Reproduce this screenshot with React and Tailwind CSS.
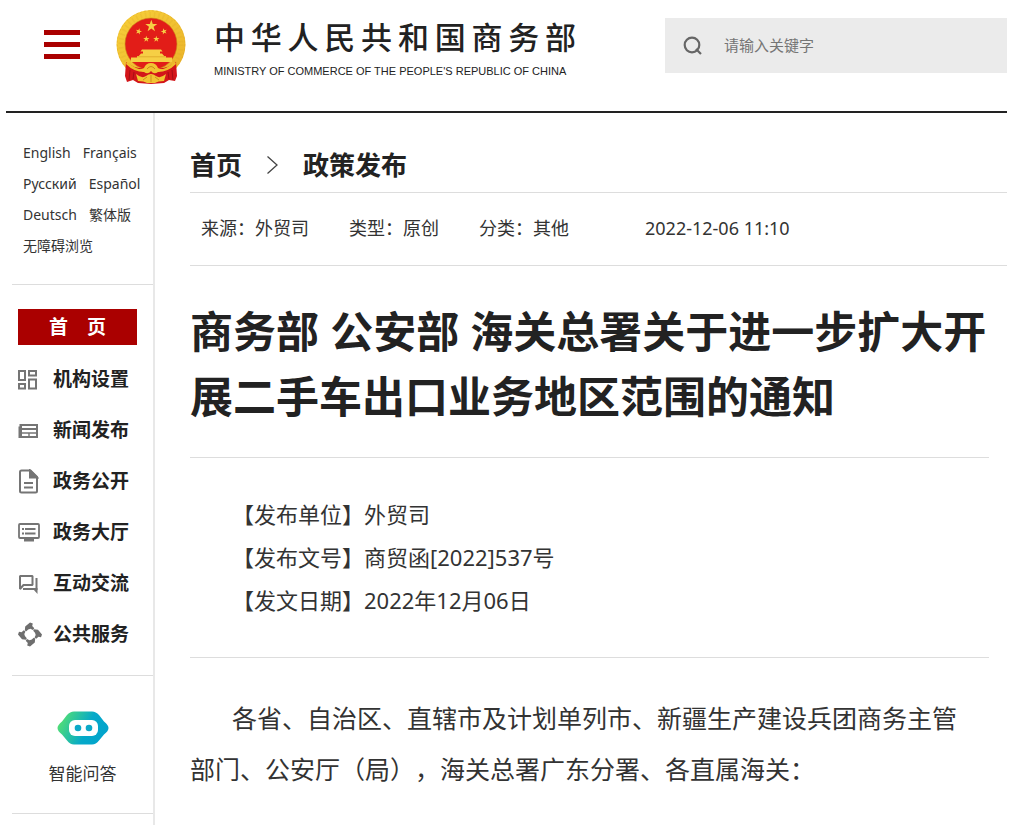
import React from 'react';

const languages = [
    ['English', 'Français'],
    ['Русский', 'Español'],
    ['Deutsch', '繁体版'],
    ['无障碍浏览'],
];

const OrgIcon = () => (
    <svg width="20" height="20" viewBox="0 0 20 20" fill="none" stroke="#757575" strokeWidth="2">
        <rect x="1" y="1" width="6" height="9" />
        <rect x="11" y="1" width="7" height="4.500" />
        <rect x="1" y="14" width="6" height="4.500" />
        <rect x="11" y="9.500" width="7" height="9" />
    </svg>
);

const NewsIcon = () => (
    <svg width="21" height="16" viewBox="0 0 21 16" fill="none" stroke="#757575" strokeWidth="2">
        <path d="M2.500 2H19V14H1.500V4.500H2.500z" />
        <path d="M2 6h17M3 2v12" />
        <path d="M3 10h16M11 10V14" strokeWidth="1.400" />
    </svg>
);

const DocIcon = () => (
    <svg width="21" height="25" viewBox="0 0 21 25" fill="none" stroke="#757575" strokeWidth="2">
        <path d="M3.500 1.500H12.500L19 8V22Q19 23.500 17.500 23.500H3.500Q2 23.500 2 22V3Q2 1.500 3.500 1.500Z" />
        <path d="M12 1.500V8.500H19Z" fill="#757575" />
        <path d="M6 14h9M6 18.500h9" />
    </svg>
);

const HallIcon = () => (
    <svg width="22" height="19" viewBox="0 0 22 19" fill="none" stroke="#757575" strokeWidth="1.800">
        <rect x="1" y="1" width="20" height="14" rx="1" />
        <path d="M4 6h2M7 6h10.500M4 10.500h2M7 10.500h10.500" />
        <path d="M6 17h10" strokeWidth="3" />
    </svg>
);

const ChatIcon = () => (
    <svg width="21" height="20" viewBox="0 0 21 20" fill="none" stroke="#757575" strokeWidth="2">
        <path d="M2 15V2h12.500v9H5.500z" strokeLinejoin="bevel" />
        <path d="M18.500 4v12M18 15H5" />
        <path d="M19.500 14v6L15 15z" fill="#757575" stroke="none" />
    </svg>
);

const ServiceIcon = () => (
    <svg width="24" height="25" viewBox="0 0 24 25" fill="#6e6e6e">
        <path id="blade" d="M6.800 8.500L7.200 4.500L12 .5L14.800 1.500L14.200 4L16.300 6.300L15 8L12.500 6.800Q10 7 8.300 9.300Z" />
        <use href="#blade" transform="rotate(90 12 12.500)" />
        <use href="#blade" transform="rotate(180 12 12.500)" />
        <use href="#blade" transform="rotate(270 12 12.500)" />
    </svg>
);

const navItems = [
    { label: '机构设置', icon: OrgIcon },
    { label: '新闻发布', icon: NewsIcon },
    { label: '政务公开', icon: DocIcon },
    { label: '政务大厅', icon: HallIcon },
    { label: '互动交流', icon: ChatIcon },
    { label: '公共服务', icon: ServiceIcon },
];

const details = [
    '【发布单位】外贸司',
    '【发布文号】商贸函[2022]537号',
    '【发文日期】2022年12月06日',
];

const STAR = 'M0-6L1.400-1.900H5.700L2.200.7 3.500 4.900 0 2.300-3.500 4.900-2.200.7-5.700-1.900H-1.400Z';

const Emblem = () => (
    <svg width="70" height="74" viewBox="0 0 70 74" aria-hidden="true">
        <defs>
            <linearGradient id="gold" x1="0" y1="0" x2="1" y2="1">
                <stop offset="0" stopColor="#f7cf3a" />
                <stop offset="0.5" stopColor="#f1c232" />
                <stop offset="1" stopColor="#e9b028" />
            </linearGradient>
        </defs>
        <circle cx="35" cy="34.500" r="34.500" fill="url(#gold)" />
        <circle cx="35" cy="34.500" r="30" fill="none" stroke="#d99f22" strokeWidth="5" strokeDasharray="1.500 3" opacity="0.2" />
        <circle cx="35" cy="34.500" r="33.800" fill="none" stroke="#d79a1f" strokeWidth="1" strokeDasharray="2 2" opacity="0.4" />
        <circle cx="35" cy="34" r="26" fill="#e21d18" stroke="#c98a1a" strokeWidth="0.600" />
        {/* stars */}
        <g fill="#f6cf45">
            <path d={STAR} transform="translate(35.300 16) scale(1.050)" />
            <path d={STAR} transform="translate(22.700 21.500) rotate(15) scale(.55)" />
            <path d={STAR} transform="translate(48 21.500) rotate(-15) scale(.55)" />
            <path d={STAR} transform="translate(30.300 29) scale(.55)" />
            <path d={STAR} transform="translate(40.300 29) scale(.55)" />
            {/* Tiananmen gate */}
            <path d="M26 39.500H45L46.500 41.500H24.500ZM27 41H44V44H27ZM25 43.500H46L49 47H22ZM21 46H50V49H21ZM15 47.500H56V52H15Z" />
        </g>
        <path d="M21 46.800H50" stroke="#d99f22" strokeWidth="0.700" />
        {/* ribbons and gear */}
        <path d="M10 52Q22 61 31 57Q35 52 39 57Q48 61 60 52L61 66 59 71 53 70 48 73 35 74 22 73 17 70 11 72 9 66Z" fill="#d3151a" />
        <path d="M11 52Q22 61 29 59L28 62Q18 62 10 54ZM59 52Q48 61 41 59L42 62Q52 62 60 54Z" fill="#efbe2c" />
        <path d="M14 60L13 70M18 62L17 69M56 60L57 70M52 62L53 69" stroke="#a70d14" strokeWidth="1" />
        <path d="M28 58Q30 53 35 53T42 58L47 60 42 62Q38 65 35 61Q32 65 28 62L23 60Z" fill="#f2c432" />
        <path d="M31 59Q35 54 39 59" fill="none" stroke="#c98a1a" />
        <path d="M20 64Q26 69 30 66Q35 62 40 66Q44 69 50 64L48 71Q42 71 39 73H31Q28 71 22 71Z" fill="#f2c432" />
        <path d="M27 70L31 67M43 70L39 67M35 65V72" stroke="#cd901e" strokeWidth="1" />
    </svg>
);

const Robot = () => (
    <svg width="52" height="34" viewBox="0 0 52 34" aria-hidden="true">
        <defs>
            <linearGradient id="robot" x1="0" y1="0.300" x2="1" y2="0.600">
                <stop offset="0.050" stopColor="#4fdc78" />
                <stop offset="0.600" stopColor="#05a9c9" />
                <stop offset="1" stopColor="#02a3cc" />
            </linearGradient>
        </defs>
        <path d="M17 .5H35Q39 .5 42 4L47 10.500Q51.500 14 51.500 17Q51.500 20 47 23.500L42 29.500Q39 33.500 35 33.500H17Q13 33.500 10 29.500L5 23.500Q.5 20 .5 17Q.5 14 5 10.500L10 4Q13 .5 17 .5Z" fill="url(#robot)" />
        <rect x="12" y="9" width="29" height="16" rx="6" fill="#fff" />
        <circle cx="21" cy="17" r="3.300" fill="#0ba9c8" />
        <circle cx="32" cy="17" r="3.300" fill="#0ba9c8" />
    </svg>
);

const Header = () => (
    <header className="flex items-start justify-between border-b-2 border-[#222] pb-[27px]">
        <div className="flex items-start">
            <button type="button" aria-label="菜单" className="mt-[30px] ml-[38px] flex w-9 flex-col gap-[7px]">
                <span className="h-[5px] w-full bg-[#aa0000]" />
                <span className="h-[5px] w-full bg-[#aa0000]" />
                <span className="h-[5px] w-full bg-[#aa0000]" />
            </button>
            <a href="#home" className="ml-9 flex pt-[10px] text-[#222]">
                <Emblem />
                <span className="ml-7 flex w-[362px] flex-col">
                    <span className="text-[31px] leading-[55px] font-medium [text-align-last:justify]">中华人民共和国商务部</span>
                    <span className="font-['Liberation_Sans',Arial,sans-serif] text-[11px] leading-3">
                        MINISTRY OF COMMERCE OF THE PEOPLE'S REPUBLIC OF CHINA
                    </span>
                </span>
            </a>
        </div>
        <label className="mt-[18px] flex h-[55px] w-[342px] items-center bg-[#ebebeb] pl-[18px]">
            <svg width="20" height="20" viewBox="0 0 20 20" fill="none" stroke="#666" strokeWidth="2.200" className="shrink-0">
                <circle cx="9" cy="9" r="7.300" />
                <path d="M13 13l5 5" />
            </svg>
            <input
                type="text"
                aria-label="搜索"
                placeholder="请输入关键字"
                className="ml-[21px] min-w-0 flex-1 bg-transparent text-[15px] outline-none placeholder:text-[#757575]"
            />
        </label>
    </header>
);

const Sidebar = () => (
    <aside className="w-[149px] shrink-0 border-r-2 border-[#e8e8e8] pl-[6px]">
        <div className="border-b border-[#ddd] pt-6 pb-[23px] pl-[11px] text-[14px] leading-[31px] text-[#333]">
            {languages.map((row) => (
                <div key={row[0]} className="flex gap-3 whitespace-nowrap">
                    {row.map((name) => (
                        <a key={name} href="#lang">{name}</a>
                    ))}
                </div>
            ))}
        </div>

        <nav className="border-b border-[#ddd] pt-6 pr-4 pb-[15px] pl-[6px] text-[19px] font-bold text-[#222]">
            <a href="#home" className="mb-[9px] block bg-[#aa0000] text-center leading-9 text-white">首&emsp;页</a>
            {navItems.map(({ label, icon: Icon }) => (
                <a key={label} href="#nav" className="flex h-[51px] items-center whitespace-nowrap">
                    <span className="flex w-[35px] items-center">
                        <Icon />
                    </span>
                    {label}
                </a>
            ))}
        </nav>

        <a href="#robot" className="flex flex-col items-center border-b border-[#ddd] pt-[35px] pb-[26px] text-[17px] text-[#333]">
            <Robot />
            <span className="mt-4 leading-[26px]">智能问答</span>
        </a>
    </aside>
);

const Article = () => (
    <main className="min-w-0 flex-1 pl-[35px] text-[#222]">
        <div className="flex items-center border-b border-[#ddd] pt-8 pb-[7px] text-[26px] leading-10 font-bold">
            <a href="#home">首页</a>
            <svg width="13" height="20" viewBox="0 0 13 20" fill="none" stroke="#444" strokeWidth="1.300" className="mx-6">
                <path d="M1.500 1.500L11 10L1.500 18.500" />
            </svg>
            <a href="#policy">政策发布</a>
        </div>

        <div className="flex gap-10 border-b border-[#ddd] pt-[21px] pb-[23px] pl-[11px] text-[18px] leading-7 whitespace-nowrap text-[#333]">
            <span>来源：外贸司</span>
            <span>类型：原创</span>
            <span>分类：其他</span>
            <time className="ml-9">2022-12-06 11:10</time>
        </div>

        <article className="pr-[18px]">
            <h1 className="border-b border-[#ddd] pt-[33px] pb-7 text-[43px] leading-[65px] font-bold">
                商务部 公安部 海关总署关于进一步扩大开展二手车出口业务地区范围的通知
            </h1>
            <div className="border-b border-[#ddd] py-[35px] pl-[42px] text-[22px] leading-[43px] text-[#333]">
                {details.map((line) => (
                    <p key={line}>{line}</p>
                ))}
            </div>
            <p className="pt-[35px] pr-2 indent-[42px] text-[25px] leading-[51px] text-[#333] [text-spacing-trim:space-all]">
                各省、自治区、直辖市及计划单列市、新疆生产建设兵团商务主管部门、公安厅（局），海关总署广东分署、各直属海关：
            </p>
        </article>
    </main>
);

const App = () => (
    <div lang="zh-CN" className="min-h-screen bg-white pr-[13px] pl-[6px] font-['Noto_Sans','Noto_Sans_CJK_SC',sans-serif]">
        <Header />
        <div className="flex min-h-[calc(100vh-113px)]">
            <Sidebar />
            <Article />
        </div>
    </div>
);

export default App;
